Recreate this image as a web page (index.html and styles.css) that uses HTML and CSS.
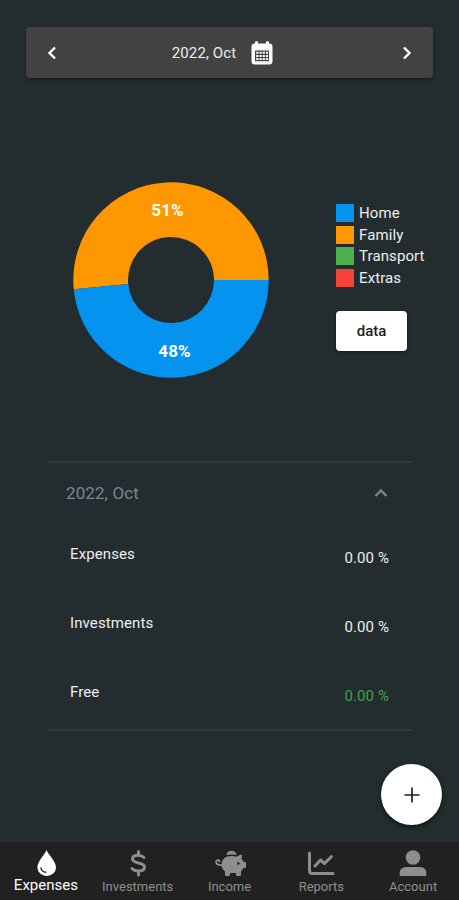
FILE: index.html
```html
<!DOCTYPE html>
<html lang="en">
<head>
  <meta charset="UTF-8">
  <meta name="viewport" content="width=device-width, initial-scale=1.0">
  <title>Expenses</title>
  <link rel="stylesheet" href="styles.css">
</head>
<body>

<header class="month-bar">
  <button class="arrow" aria-label="Previous month">
    <svg width="12" height="14" viewBox="0 0 12 14"><path d="M9 1.5 3.5 7 9 12.5"/></svg>
  </button>
  <div class="month">
    <span>2022, Oct</span>
    <svg class="calendar" width="22" height="24" viewBox="0 0 22 24">
      <path fill="#fff" d="M4 2.5V1.2Q4 .3 5 .3h1q1 0 1 .9v1.3h8V1.2q0-.9 1-.9h1q1 0 1 .9v1.3Q21.500 2.500 21.500 5.500V20q0 3.500-3.500 3.500H4Q.5 23.500.5 20V5.500Q.5 2.500 4 2.500z"/>
      <path fill="#424242" d="M4 9.500h14v10.700H4z"/>
      <path fill="#fff" d="M5.200 10.700h2.300v2H5.200zM8.500 10.700h2.200v2H8.500zM11.700 10.700h2.200v2h-2.200zM14.900 10.700h2.200v2h-2.200zM5.200 13.900h2.300v2H5.200zM8.500 13.900h2.200v2H8.500zM11.700 13.900h2.200v2h-2.200zM14.900 13.900h2.200v2h-2.200zM5.200 17.100h2.300v2H5.200zM8.500 17.100h2.200v2H8.500zM11.700 17.100h2.200v2h-2.200zM14.900 17.100h2.200v2h-2.200z"/>
    </svg>
  </div>
  <button class="arrow" aria-label="Next month">
    <svg width="12" height="14" viewBox="0 0 12 14"><path d="M3 1.500 8.500 7 3 12.500"/></svg>
  </button>
</header>

<main>
  <section class="chart">
    <svg class="donut" width="196" height="196" viewBox="-98 -98 196 196">
      <path fill="#ff9800" d="M97.700 0A97.700 97.700 0 1 0-97.270 9.200L-42.810 4.050A43 43 0 1 1 43 0z"/>
      <path fill="#0593f0" d="M97.700 0A97.700 97.700 0 0 1-97.270 9.200L-42.810 4.050A43 43 0 0 0 43 0z"/>
      <text x="-3.500" y="-64">51%</text>
      <text x="3.500" y="76.500">48%</text>
    </svg>
    <div class="side">
      <ul class="legend">
        <li><i class="home"></i>Home</li>
        <li><i class="family"></i>Family</li>
        <li><i class="transport"></i>Transport</li>
        <li><i class="extras"></i>Extras</li>
      </ul>
      <button class="data">data</button>
    </div>
  </section>

  <section class="summary">
    <div class="summary-head">
      <span>2022, Oct</span>
      <svg width="14" height="10" viewBox="0 0 14 10"><path d="M1.500 8 7 2.500 12.500 8"/></svg>
    </div>
    <div class="row"><span>Expenses</span><span class="value">0.00 %</span></div>
    <div class="row"><span>Investments</span><span class="value">0.00 %</span></div>
    <div class="row"><span>Free</span><span class="value free">0.00 %</span></div>
  </section>
</main>

<button class="add" aria-label="Add">
  <svg width="16" height="16" viewBox="0 0 16 16"><path d="M8 .5v15M.5 8h15"/></svg>
</button>

<nav class="tabs">
  <a class="tab active">
    <svg width="30" height="28" viewBox="0 0 30 28">
      <path fill="currentColor" d="M15.500 1C17 5.500 25 12 25 18.500a9.300 8.500 0 0 1-18.600 0C6.400 12 14 5.500 15.500 1z"/>
      <path class="drop-shine" d="M10 19q.6 3.700 4.500 4.300"/>
    </svg>
    <span>Expenses</span>
  </a>
  <a class="tab">
    <svg width="30" height="28" viewBox="0 0 30 28">
      <path class="line" d="M15.500 2.500v3.500M15.500 22v4M21 8.500Q18.500 6.200 15.300 6.200c-3.800 0-5.800 1.500-5.800 3.800 0 5.200 12 2.800 12 8 0 2.700-2.500 4-6 4Q11.500 22 9 19.500"/>
    </svg>
    <span>Investments</span>
  </a>
  <a class="tab">
    <svg width="34" height="28" viewBox="0 0 34 28">
      <path fill="currentColor" d="M14.300 6a5.300 5.300 0 0 1 10.400 0q-5-1-10.400 0z"/>
      <path fill="currentColor" d="M14 8q5-1.700 10.500-.2Q27 5.700 30.300 5.500L29.500 9.800Q31 11 31.700 13H33q1.200 0 1.200 1.200v3.600q0 1.200-1.200 1.200h-1.500q-1 2-2.500 3.200v3.600q0 1.200-1.200 1.200h-2.600q-1.200 0-1.200-1.200V24h-6v1.800q0 1.200-1.200 1.200h-2.600q-1.200 0-1.200-1.200V22.500Q9.500 19.500 9.500 15.500 9.500 10.500 14 8z"/>
      <path class="tail" d="M9.500 16q-4.500.3-5.300-2.200-.4-2.300 1.500-2.800 1.700 0 1.800 1.400"/>
      <circle cx="26.300" cy="14.500" r="1.300" fill="#212121"/>
    </svg>
    <span>Income</span>
  </a>
  <a class="tab">
    <svg width="30" height="28" viewBox="0 0 30 28">
      <path class="axis" d="M3.500 4v17.500q0 3 3 3h20.500"/>
      <path class="trend" d="m9 17 5.500-6 4 3.500 7-7"/>
    </svg>
    <span>Reports</span>
  </a>
  <a class="tab">
    <svg width="30" height="28" viewBox="0 0 30 28">
      <circle cx="15" cy="8.500" r="7.300" fill="currentColor"/>
      <path fill="currentColor" d="M1.700 27v-2.500q0-6.500 6.500-6.500h13.600q6.500 0 6.500 6.500V27z"/>
    </svg>
    <span>Account</span>
  </a>
</nav>

</body>
</html>
```
FILE: styles.css
```css
* {
  box-sizing: border-box;
}
body {
  display: flex;
  flex-direction: column;
  height: 900px;
  margin: 0;
  padding-top: 27px;
  overflow: hidden;
  font-family: Roboto, sans-serif;
  font-size: 15px;
  letter-spacing: 0.1px;
  color: #eee;
  background-color: #232d2f;
}
button {
  padding: 0;
  border: none;
  background: none;
  font-family: inherit;
  cursor: pointer;
}
svg {
  display: block;
  flex: none;
}
.month-bar {
  display: flex;
  align-items: center;
  justify-content: space-between;
  height: 51px;
  margin: 0 26px;
  padding: 0 20px;
  border-radius: 4px;
  background-color: #424242;
  box-shadow: 0 2px 4px rgba(0,0,0,0.3);
}
.arrow path {
  fill: none;
  stroke: #fff;
  stroke-width: 2.4;
}
.month {
  display: flex;
  align-items: center;
  gap: 15px;
  padding-right: 14px;
}
main {
  flex: 1;
}
.chart {
  display: flex;
  align-items: flex-start;
  height: 356px;
  padding: 104px 0 0 73px;
}
.side {
  margin: 20px 0 0 67px;
}
.legend {
  margin: 0;
  padding: 0;
  list-style: none;
}
.legend li {
  display: flex;
  align-items: center;
  gap: 5px;
  height: 21.7px;
}
.legend i {
  width: 18px;
  height: 18px;
}
.home {
  background-color: #0593f0;
}
.family {
  background-color: #ff9800;
}
.transport {
  background-color: #4caf50;
}
.extras {
  background-color: #f44336;
}
.donut text {
  fill: #fff;
  font-size: 17px;
  font-weight: bold;
  text-anchor: middle;
}
.data {
  width: 71px;
  height: 40px;
  margin-top: 22px;
  border-radius: 4px;
  font-size: 15px;
  font-weight: 500;
  color: #222;
  background-color: #fff;
  box-shadow: 0 1px 3px rgba(0,0,0,0.5);
}
.summary {
  margin: 27px 47px 0 48px;
  height: 270px;
  border-top: 2px solid #323c3e;
  border-bottom: 2px solid #323c3e;
}
.summary-head {
  display: flex;
  align-items: center;
  justify-content: space-between;
  height: 60px;
  padding: 0 24px 0 18px;
  font-size: 17px;
  color: #74869c;
}
.summary-head path {
  fill: none;
  stroke: #74869c;
  stroke-width: 2.4;
}
.row {
  display: flex;
  justify-content: space-between;
  height: 69px;
  padding: 21px 23px 0 22px;
  line-height: 20px;
}
.value {
  padding-top: 4px;
}
.free {
  color: #43a047;
}
.add {
  position: absolute;
  top: 764px;
  left: 381px;
  display: flex;
  align-items: center;
  justify-content: center;
  width: 61px;
  height: 61px;
  border-radius: 50%;
  background-color: #fff;
  box-shadow: 0 2px 5px rgba(0,0,0,0.6);
}
.add path {
  stroke: #222;
  stroke-width: 1.7;
}
.tabs {
  display: grid;
  grid-template-columns: repeat(5, 1fr);
  height: 58px;
  background-color: #212121;
}
.tab {
  display: flex;
  flex-direction: column;
  align-items: center;
  padding-top: 7px;
  font-size: 13px;
  line-height: 16px;
  letter-spacing: 0;
  color: #8e8e8e;
}
.tab span {
  margin-top: 2px;
}
.tab path {
  stroke-linecap: round;
  stroke-linejoin: round;
}
.active {
  font-size: 15px;
  color: #fff;
}
.active span {
  margin-top: 0;
}
.drop-shine {
  fill: none;
  stroke: #212121;
  stroke-width: 1.4;
}
.line, .axis, .trend {
  fill: none;
  stroke: currentColor;
  stroke-width: 3;
}
.tail {
  fill: none;
  stroke: currentColor;
  stroke-width: 1.8;
}
```
